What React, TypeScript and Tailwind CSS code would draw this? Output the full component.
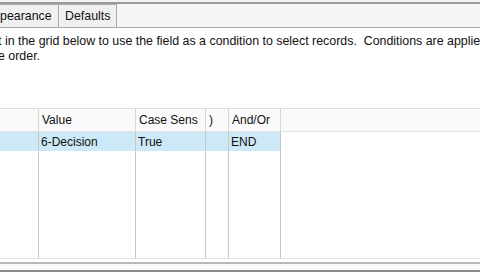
const cols = [
  { w: 'w-[39px]', head: '', val: '' },
  { w: 'w-[97px]', head: 'Value', val: '6-Decision' },
  { w: 'w-[70px]', head: 'Case Sens', val: 'True' },
  { w: 'w-[23px]', head: ')', val: '' },
  { w: 'w-[52px]', head: 'And/Or', val: 'END' },
];

const App = () => {
  return (
    <div
      className="w-[480px] h-[277px] overflow-hidden bg-white text-[12px] text-[#111] flex flex-col"
      style={{ fontFamily: '"Liberation Sans", Arial, sans-serif' }}
    >
      {/* tab strip */}
      <div className="h-[2px] bg-[#f4f4f4]" />
      <div className="h-[2px] bg-[#9b9b9b]" />
      <div className="h-[24px] bg-[#f5f5f5] border-b border-[#a9a9a9] flex items-end">
        <div className="h-[23px] w-[59px] border-t border-r border-[#acacac] bg-[#f0f0f0] flex items-center overflow-hidden">
          <span className="whitespace-nowrap text-[12.4px]">pearance</span>
        </div>
        <div className="h-[23px] w-[58px] border-t border-r border-[#acacac] bg-[#f0f0f0] flex items-center pl-[6px]">
          <span className="whitespace-nowrap text-[12.4px]">Defaults</span>
        </div>
      </div>

      {/* description */}
      <div className="pt-[6px] leading-[15px] whitespace-nowrap -ml-[2px] h-[80px] text-[12.4px]">
        <div>t in the grid below to use the field as a condition to select records.&nbsp; Conditions are applied</div>
        <div>e order.</div>
      </div>

      {/* grid */}
      <div className="h-[150px] border-t border-[#dcdcdc] flex flex-col">
        <div className="h-[23px] flex bg-[#fafafa] border-b border-[#e2e2e2]">
          {cols.map((c, i) => (
            <div key={i} className={`${c.w} shrink-0 border-r border-[#d5d5d5] flex items-center pl-[3px] whitespace-nowrap`}>
              {c.head}
            </div>
          ))}
          <div className="flex-1" />
        </div>
        <div className="flex-1 flex">
          {cols.map((c, i) => (
            <div key={i} className={`${c.w} shrink-0 border-r border-[#c8c8c8] flex flex-col`}>
              <div className="h-[19px] bg-[#cde8f6] flex items-center pl-[2px] whitespace-nowrap">{c.val}</div>
            </div>
          ))}
          <div className="flex-1" />
        </div>
      </div>

      {/* bottom edges */}
      <div className="h-[1px] bg-[#e3e3e3]" />
      <div className="h-[3px]" />
      <div className="h-[2px] bg-[#b8b8b8]" />
      <div className="h-[6px] bg-[#fbfbfb]" />
      <div className="h-[2px] bg-[#8c8c8c]" />
      <div className="flex-1" />
    </div>
  );
};

export default App;
